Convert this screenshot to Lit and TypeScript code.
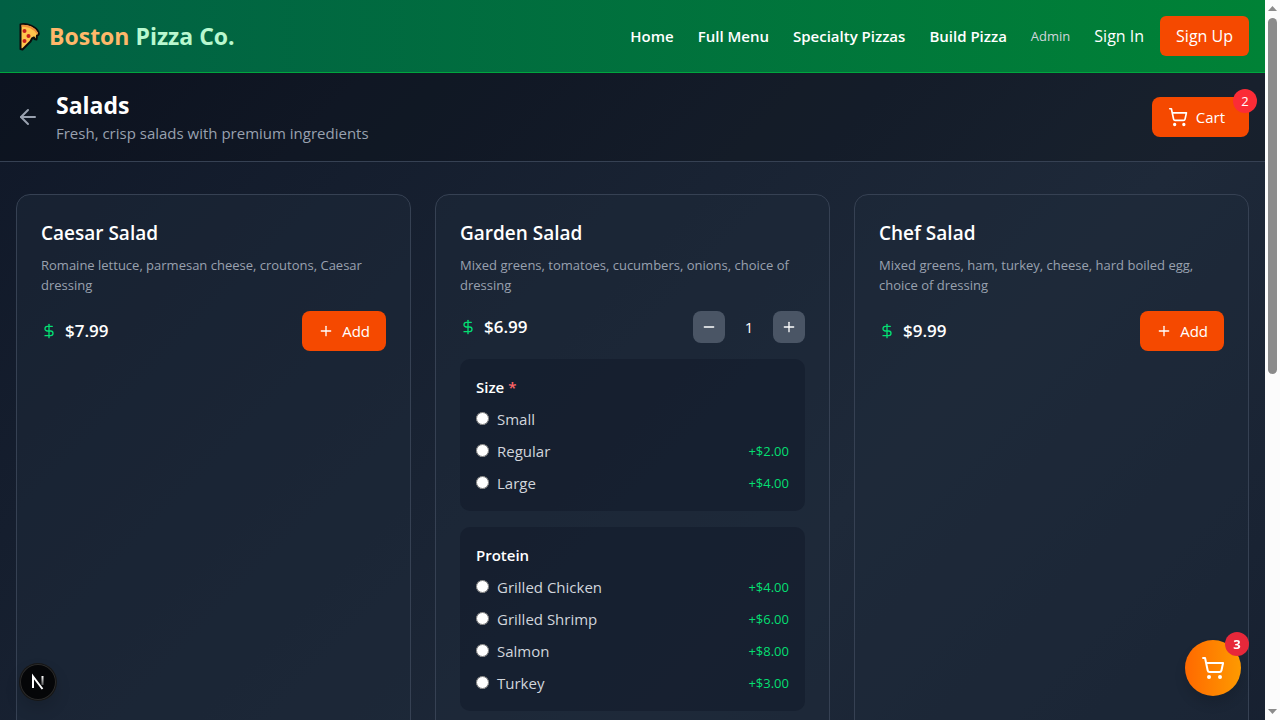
import { LitElement, html, svg, css, nothing } from "lit";
import { customElement, property, state } from "lit/decorators.js";

interface Option { name: string; extra?: string }
interface Group { title: string; required?: boolean; options: Option[] }
interface Salad { id: string; name: string; text: string; price: string; groups?: Group[] }

const SALADS: Salad[] = [
  { id: "caesar", name: "Caesar Salad", text: "Romaine lettuce, parmesan cheese, croutons, Caesar dressing", price: "$7.99" },
  {
    id: "garden",
    name: "Garden Salad",
    text: "Mixed greens, tomatoes, cucumbers, onions, choice of dressing",
    price: "$6.99",
    groups: [
      { title: "Size", required: true, options: [{ name: "Small" }, { name: "Regular", extra: "+$2.00" }, { name: "Large", extra: "+$4.00" }] },
      {
        title: "Protein",
        options: [
          { name: "Grilled Chicken", extra: "+$4.00" },
          { name: "Grilled Shrimp", extra: "+$6.00" },
          { name: "Salmon", extra: "+$8.00" },
          { name: "Turkey", extra: "+$3.00" },
        ],
      },
    ],
  },
  { id: "chef", name: "Chef Salad", text: "Mixed greens, ham, turkey, cheese, hard boiled egg, choice of dressing", price: "$9.99" },
];

const icon = (size: number, body: unknown) => html`<svg width=${size} height=${size} viewBox="0 0 24 24" fill="none"
  stroke="currentColor" stroke-width="2" stroke-linecap="round" stroke-linejoin="round" aria-hidden="true">${body}</svg>`;

const cart = svg`<circle cx="8" cy="21" r="1"></circle><circle cx="19" cy="21" r="1"></circle>
  <path d="M2.05 2.05h2l2.66 12.42a2 2 0 0 0 2 1.58h9.78a2 2 0 0 0 1.95-1.57l1.65-7.43H5.12"></path>`;
const arrow = svg`<path d="m12 19-7-7 7-7"></path><path d="M19 12H5"></path>`;
const plus = svg`<path d="M5 12h14"></path><path d="M12 5v14"></path>`;
const minus = svg`<path d="M5 12h14"></path>`;
const dollar = svg`<path d="M12 2v20"></path><path d="M17 5H9.500a3.500 3.500 0 0 0 0 7h5a3.500 3.500 0 0 1 0 7H6"></path>`;

@customElement("salad-card")
export class SaladCard extends LitElement {
  @property({ attribute: false }) salad!: Salad;
  @state() private count = 1;

  static styles = css`
    :host { display: block; box-sizing: border-box; min-width: 0; padding: 24px; border: 1px solid #364153;
      border-radius: 14px; background: rgba(30, 41, 57, 0.5); }
    h2 { margin: 0 0 8px; font-size: 19px; line-height: 28px; font-weight: 600; color: #fff; }
    p { margin: 0 0 16px; font-size: 13px; line-height: 20px; color: #99a1af; }
    svg { display: block; }
    .row, .price, .add, .stepper, .option, .pick { display: flex; align-items: center; }
    .row { justify-content: space-between; margin-bottom: 16px; }
    .price { gap: 8px; color: #fff; font-size: 17px; line-height: 28px; font-weight: 600; }
    .price svg { color: #05df72; }
    button { border: 0; color: #fff; font: inherit; cursor: pointer; border-radius: 8px; }
    .add { gap: 8px; padding: 8px 16px; background: #f54900; font-size: 15px; line-height: 24px; }
    .stepper { gap: 8px; color: #fff; font-size: 15px; line-height: 24px; }
    .step { display: grid; place-items: center; width: 32px; height: 32px; padding: 0; background: #4a5565; }
    output { width: 32px; text-align: center; }
    fieldset { display: grid; gap: 8px; margin: 0 0 16px; padding: 16px; border: 0; border-radius: 10px;
      background: rgba(16, 24, 40, 0.5); min-width: 0; }
    legend { float: left; padding: 0; font-size: 15px; line-height: 24px; font-weight: 600; color: #fff; }
    .required { color: #ff6467; }
    .option { justify-content: space-between; font-size: 15px; line-height: 24px; color: #d1d5dc; }
    .pick { gap: 8px; }
    .radio { width: 13px; height: 13px; margin: 0 0 1px; }
    .extra { font-size: 13px; line-height: 20px; color: #05df72; }
  `;

  render() {
    const s = this.salad;
    return html`
      <h2>${s.name}</h2>
      <p>${s.text}</p>
      <div class="row">
        <span class="price">${icon(16, dollar)}${s.price}</span>
        ${s.groups
          ? html`<div class="stepper">
              <button class="step" aria-label="Remove one" @click=${() => (this.count = Math.max(0, this.count - 1))}>${icon(16, minus)}</button>
              <output>${this.count}</output>
              <button class="step" aria-label="Add one" @click=${() => this.count++}>${icon(16, plus)}</button>
            </div>`
          : html`<button class="add">${icon(16, plus)}Add</button>`}
      </div>
      ${(s.groups ?? []).map(
        (g) => html`<fieldset>
          <legend>${g.title} ${g.required ? html`<span class="required">*</span>` : nothing}</legend>
          ${g.options.map(
            (o) => html`<label class="option">
              <span class="pick"><input class="radio" type="radio" name=${g.title} value=${o.name} />${o.name}</span>
              ${o.extra ? html`<span class="extra">${o.extra}</span>` : nothing}
            </label>`
          )}
        </fieldset>`
      )}
    `;
  }
}

@customElement("app-root")
export class AppRoot extends LitElement {
  static styles = css`
    :host { display: flex; height: 100vh; overflow: hidden; font-family: "Segoe UI", "Open Sans", "Noto Sans", sans-serif;
      font-size: 15px; line-height: 24px; color: #fff; }
    a { color: inherit; text-decoration: none; }
    svg { display: block; }
    .view { position: relative; flex: 1; min-width: 0; display: flex; }
    .scroll { flex: 1; min-width: 0; overflow-y: auto; scrollbar-width: none; }
    .top { display: flex; align-items: center; justify-content: space-between; padding: 16px;
      border-bottom: 1px solid #00a63e; background: linear-gradient(to right, #016044, #008236); }
    .brand { display: flex; align-items: center; gap: 7px; font-size: 23px; line-height: 32px; font-weight: 700; color: #b9f8cf; }
    .boston { color: #ffb86a; }
    .links { display: flex; align-items: center; gap: 24px; }
    .strong { font-weight: 600; }
    .admin { font-size: 13px; line-height: 20px; color: #d1d5dc; }
    .account { display: flex; align-items: center; gap: 16px; font-size: 16px; }
    .signup { padding: 8px 16px; border-radius: 6px; background: #f54900; }
    .page { min-height: 182vh; box-sizing: border-box; display: flex; flex-direction: column;
      background: linear-gradient(to bottom right, #101828, #1e2939, #101828); }
    .head { display: flex; align-items: center; justify-content: space-between; padding: 16px;
      border-bottom: 1px solid #364153; background: rgba(0, 0, 0, 0.2); }
    .title { display: flex; align-items: center; gap: 16px; }
    .back { color: #99a1af; }
    h1 { margin: 0; font-size: 23px; line-height: 32px; font-weight: 700; }
    .sub { margin: 0; color: #99a1af; }
    .cart { position: relative; display: flex; align-items: center; gap: 8px; padding: 8px 24px 8px 16px; border: 0;
      border-radius: 8px; background: #f54900; color: #fff; font: inherit; cursor: pointer; }
    .badge { position: absolute; top: -8px; right: -8px; width: 24px; height: 24px; border-radius: 12px;
      background: #fb2c36; font-size: 13px; line-height: 24px; text-align: center; }
    .grid { flex: 1; display: grid; grid-template-columns: repeat(3, minmax(0, 1fr)); gap: 24px; padding: 32px 16px; }
    .fab { position: absolute; right: 24px; bottom: 24px; display: grid; place-items: center; width: 56px; height: 56px;
      padding: 0; border: 0; border-radius: 28px; color: #fff; font: inherit; cursor: pointer;
      background: linear-gradient(to right, #ff6900, #fe9a00); box-shadow: 0 8px 12px rgba(0, 0, 0, 0.12); }
    .fab .badge { background: #e7283a; font-weight: 700; }
    .dev { position: absolute; left: 20px; bottom: 20px; width: 36px; height: 36px; padding: 0; border: 0; border-radius: 18px;
      background: #050608; box-shadow: 0 0 0 1px #171717, inset 0 0 0 1px #2b2b2b, 0 8px 16px rgba(0, 0, 0, 0.15); cursor: pointer; }
    .bar { width: 15px; display: flex; flex-direction: column; align-items: center; justify-content: space-between;
      background: #fcfcfc; color: #8b8b8b; }
    .track { flex: 1; width: 9px; padding-top: 1px; }
    .thumb { height: 52%; border-radius: 5px; background: #8b8b8b; }
  `;

  render() {
    return html`
      <div class="view">
        <div class="scroll">
          <header class="top">
            <a class="brand" href="#">
              <svg width="26" height="32" viewBox="0 0 26 32" aria-hidden="true">
                <path d="M4.500 4.500C11 3 20 6.500 22.500 12.500c1 2-.5 3-1.500 3l-.5 4-2-.5-.5-1.500-2 1-1.500 3L6.500 29.500 4.500 29Z" fill="#ffc44d" stroke="#0c0c0c" stroke-width="2" stroke-linejoin="round"></path>
                <path d="M5.500 5.800c6-.8 13 2.200 15.800 7.500" fill="none" stroke="#f0903c" stroke-width="2"></path>
                <g fill="#c41e1e"><circle cx="8.500" cy="11" r="2"></circle><circle cx="12.500" cy="16" r="2"></circle><circle cx="8.500" cy="21" r="2"></circle></g>
              </svg>
              <span><span class="boston">Boston</span> Pizza Co.</span>
            </a>
            <nav class="links">
              <a class="strong" href="#">Home</a>
              <a class="strong" href="#">Full Menu</a>
              <a class="strong" href="#">Specialty Pizzas</a>
              <a class="strong" href="#">Build Pizza</a>
              <a class="admin" href="#">Admin</a>
              <div class="account"><a href="#">Sign In</a><a class="signup" href="#">Sign Up</a></div>
            </nav>
          </header>
          <main class="page">
            <div class="head">
              <div class="title">
                <a class="back" href="#" aria-label="Back">${icon(24, arrow)}</a>
                <div><h1>Salads</h1><p class="sub">Fresh, crisp salads with premium ingredients</p></div>
              </div>
              <button class="cart">${icon(20, cart)}Cart<span class="badge">2</span></button>
            </div>
            <div class="grid">${SALADS.map((s) => html`<salad-card .salad=${s}></salad-card>`)}</div>
          </main>
        </div>
        <button class="dev" aria-label="Developer tools">
          <svg width="36" height="36" viewBox="0 0 36 36" fill="none" aria-hidden="true">
            <defs><linearGradient id="fade" x1="0" y1="12" x2="0" y2="24" gradientUnits="userSpaceOnUse">
              <stop stop-color="#fff"></stop><stop offset="1" stop-color="#fff" stop-opacity="0.1"></stop></linearGradient></defs>
            <path d="M13 24V12.500L22.500 25" stroke="#fff" stroke-width="2"></path>
            <path d="M22.500 12v9" stroke="url(#fade)" stroke-width="2"></path>
          </svg>
        </button>
        <button class="fab" aria-label="Open cart">${icon(24, cart)}<span class="badge">3</span></button>
      </div>
      <div class="bar" aria-hidden="true">
        <svg width="15" height="17" viewBox="0 0 15 17"><path d="M3 11h9L7.500 6z" fill="currentColor"></path></svg>
        <div class="track"><div class="thumb"></div></div>
        <svg width="15" height="17" viewBox="0 0 15 17"><path d="M3 6h9l-4.500 5z" fill="currentColor"></path></svg>
      </div>
    `;
  }
}
